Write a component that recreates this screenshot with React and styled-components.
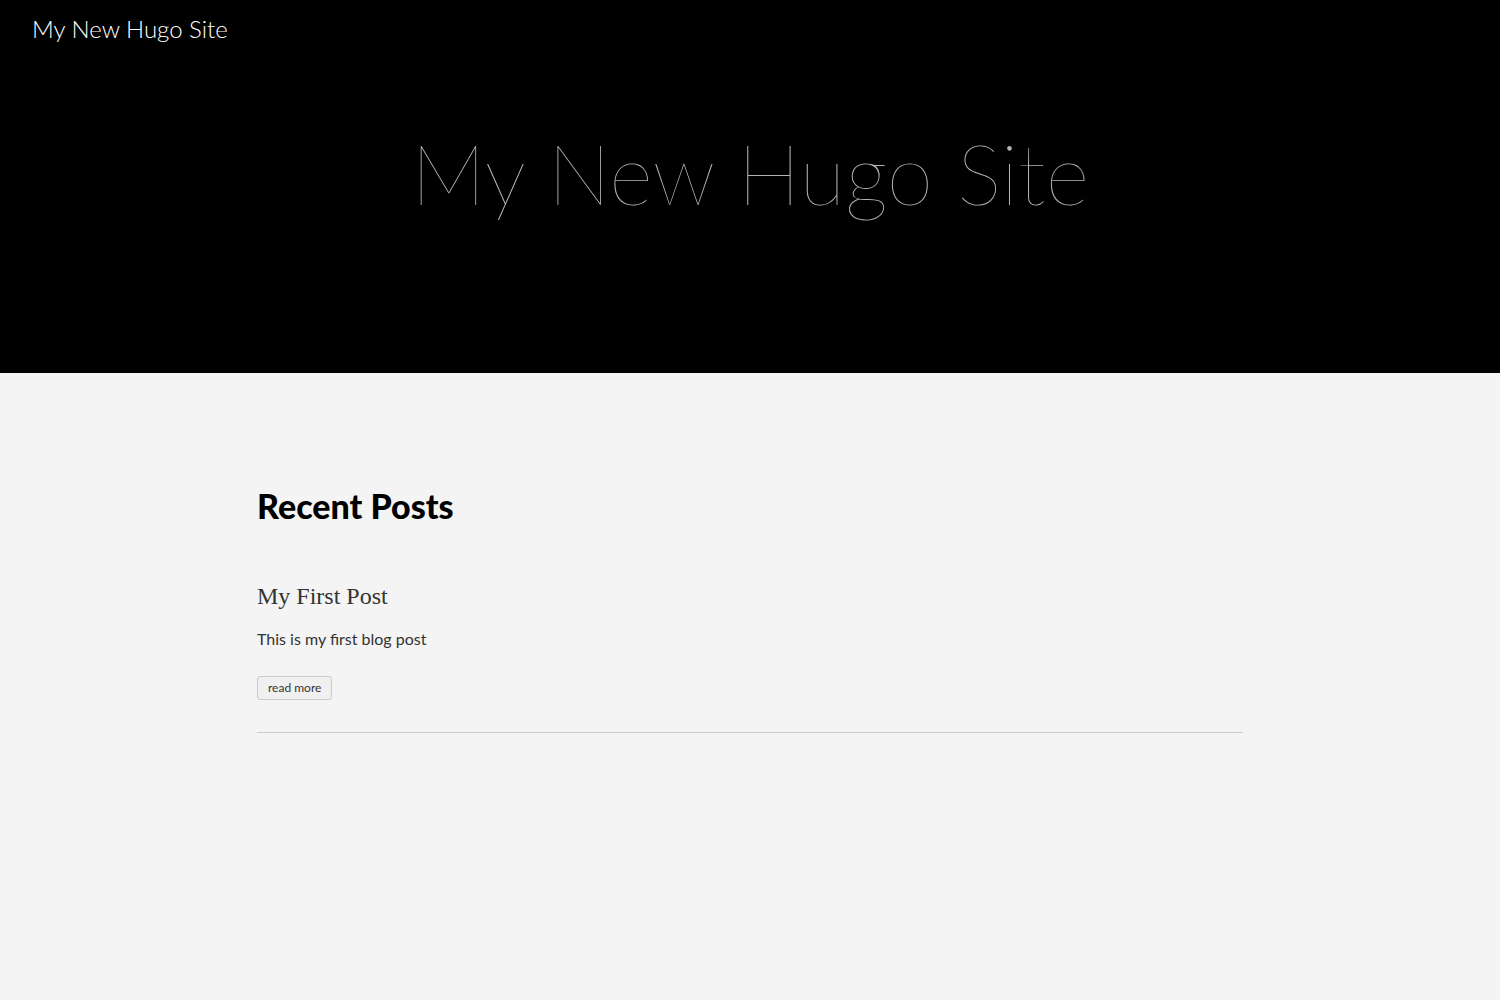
import styled, { createGlobalStyle } from "styled-components";

const GlobalStyle = createGlobalStyle`
  html, body {
    margin: 0;
    padding: 0;
    background: #f4f4f4;
  }
  body {
    font-family: Lato, "Noto Sans", sans-serif;
  }
`;

const Page = styled.div`
  min-height: 1000px;
  background: #f4f4f4;
`;

const Header = styled.header`
  background: #000;
  height: 373px;
  display: flex;
  flex-direction: column;
`;

const Nav = styled.nav`
  padding: 12px 32px;
  display: flex;
  align-items: center;
`;

const Brand = styled.a`
  color: #fff;
  font-size: 24px;
  font-weight: 300;
  text-decoration: none;
  line-height: 34px;
`;

const Hero = styled.div`
  display: flex;
  justify-content: center;
  padding-top: 73px;
`;

const HeroTitle = styled.h1`
  margin: 0;
  color: #b4b4b4;
  font-size: 84px;
  font-weight: 200;
  line-height: 1;
  letter-spacing: 0;
`;

const Main = styled.main`
  width: 986px;
  margin: 0 auto;
  padding-top: 111px;
`;

const SectionTitle = styled.h2`
  margin: 0 0 52px;
  font-size: 34px;
  font-weight: 900;
  color: #000;
  line-height: 44px;
`;

const Post = styled.article`
  border-bottom: 1px solid #ccc;
  padding-bottom: 32px;
`;

const PostTitle = styled.h3`
  margin: 0 0 15px;
  font-family: "Liberation Serif", "DejaVu Serif", serif;
  font-weight: 400;
  font-size: 24px;
  color: #333;
  line-height: 32px;
`;

const Summary = styled.p`
  margin: 0 0 25px;
  font-size: 16px;
  color: #333;
  line-height: 24px;
`;

const ReadMore = styled.a`
  display: inline-block;
  font-size: 12px;
  color: #333;
  background: #f0f0f0;
  border: 1px solid #ccc;
  border-radius: 3px;
  padding: 4px 10px;
  line-height: 14px;
  text-decoration: none;
`;

export default function App() {
  return (
    <Page>
      <GlobalStyle />
      <Header>
        <Nav>
          <Brand href="#">My New Hugo Site</Brand>
        </Nav>
        <Hero>
          <HeroTitle>My New Hugo Site</HeroTitle>
        </Hero>
      </Header>
      <Main>
        <SectionTitle>Recent Posts</SectionTitle>
        <Post>
          <PostTitle>My First Post</PostTitle>
          <Summary>This is my first blog post</Summary>
          <ReadMore href="#">read more</ReadMore>
        </Post>
      </Main>
    </Page>
  );
}
